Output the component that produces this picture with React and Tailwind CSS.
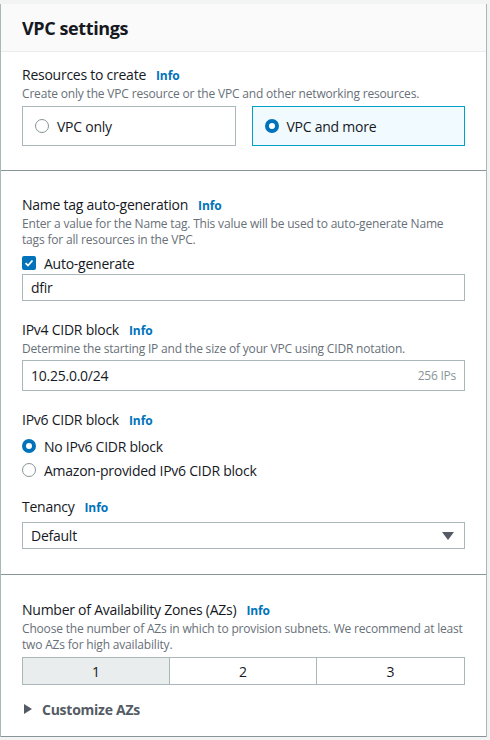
import React from "react";

const font = { fontFamily: '"Open Sans", "Noto Sans", sans-serif' };

function Info() {
  return <span className="ml-[10px] text-[12px] font-bold text-[#0073bb] tracking-[-0.1px]">Info</span>;
}

function Label({ children }) {
  return (
    <div className="flex items-baseline h-[22px] leading-[22px] text-[14px] text-[#16191f] tracking-[-0.25px]">
      <span>{children}</span>
      <Info />
    </div>
  );
}

function Desc({ children }) {
  return <div className="text-[12px] leading-[16px] text-[#687078] tracking-[-0.18px] whitespace-nowrap">{children}</div>;
}

function Radio({ checked }) {
  return checked ? (
    <span className="inline-block w-[14px] h-[14px] rounded-full border-[4px] border-[#0073bb] bg-white shrink-0" />
  ) : (
    <span className="inline-block w-[14px] h-[14px] rounded-full border border-[#879596] bg-white shrink-0" />
  );
}

export default function App() {
  return (
    <div style={font} className="w-[490px] h-[740px] bg-[#f2f3f3] pt-[4px] pr-[3px] overflow-hidden">
      <div className="bg-white border-l border-r border-[#aab7b8]">
        <div className="h-[48px] bg-[#fafafa] border-b border-[#eaeded] px-[21px] flex items-center">
          <h2 className="text-[18px] font-bold text-[#16191f] leading-[24px] tracking-[-0.4px]">VPC settings</h2>
        </div>

        <div className="px-[21px] pt-[12px] pb-[24px] border-b border-[#879596]">
          <Label>Resources to create</Label>
          <Desc>Create only the VPC resource or the VPC and other networking resources.</Desc>
          <div className="mt-[4px] grid grid-cols-2 gap-[16px] tracking-[-0.25px]">
            <div className="h-[40px] border border-[#aab7b8] flex items-center px-[12px] gap-[8px]">
              <Radio />
              <span className="text-[14px] text-[#16191f]">VPC only</span>
            </div>
            <div className="h-[40px] border border-[#00a1c9] bg-[#f1faff] flex items-center px-[12px] gap-[8px]">
              <Radio checked />
              <span className="text-[14px] text-[#16191f]">VPC and more</span>
            </div>
          </div>
        </div>

        <div className="px-[21px] pt-[23px] pb-[25px] border-b border-[#879596] tracking-[-0.25px]">
          <Label>Name tag auto-generation</Label>
          <Desc>
            Enter a value for the Name tag. This value will be used to auto-generate Name
            <br />
            tags for all resources in the VPC.
          </Desc>
          <div className="mt-[4px] h-[22px] flex items-center gap-[8px]">
            <span className="w-[14px] h-[14px] rounded-[2px] bg-[#0073bb] flex items-center justify-center">
              <svg width="10" height="10" viewBox="0 0 10 10">
                <path d="M1.5 5.2 L4 7.5 L8.5 2.5" fill="none" stroke="white" strokeWidth="1.8" />
              </svg>
            </span>
            <span className="text-[14px] text-[#16191f]">Auto-generate</span>
          </div>
          <div className="h-[27px] border border-[#aab7b8] flex items-center px-[8px] text-[14px] text-[#16191f]">
            dfir
          </div>

          <div className="mt-[18px]">
            <Label>IPv4 CIDR block</Label>
          </div>
          <Desc>Determine the starting IP and the size of your VPC using CIDR notation.</Desc>
          <div className="mt-[3px] h-[31px] border border-[#aab7b8] flex items-center justify-between px-[8px]">
            <span className="text-[14px] text-[#16191f]">10.25.0.0/24</span>
            <span className="text-[12px] text-[#879596]">256 IPs</span>
          </div>

          <div className="mt-[18px]">
            <Label>IPv6 CIDR block</Label>
          </div>
          <div className="mt-[3px] flex flex-col">
            <div className="h-[24px] flex items-center gap-[8px]">
              <Radio checked />
              <span className="text-[14px] text-[#16191f]">No IPv6 CIDR block</span>
            </div>
            <div className="h-[24px] flex items-center gap-[8px]">
              <Radio />
              <span className="text-[14px] text-[#16191f]">Amazon-provided IPv6 CIDR block</span>
            </div>
          </div>

          <div className="mt-[14px]">
            <Label>Tenancy</Label>
          </div>
          <div className="mt-[4px] h-[27px] border border-[#aab7b8] flex items-center justify-between pl-[8px] pr-[10px]">
            <span className="text-[14px] text-[#16191f]">Default</span>
            <svg width="12" height="8" viewBox="0 0 12 8">
              <path d="M0 0 L12 0 L6 8 Z" fill="#545b64" />
            </svg>
          </div>
        </div>

        <div className="px-[21px] pt-[24px] pb-[16px] border-b border-[#879596] tracking-[-0.25px]">
          <Label>Number of Availability Zones (AZs)</Label>
          <Desc>
            Choose the number of AZs in which to provision subnets. We recommend at least
            <br />
            two AZs for high availability.
          </Desc>
          <div className="mt-[4px] w-[443px] h-[28px] grid grid-cols-3 border border-[#aab7b8] text-[14px] text-[#16191f]">
            <div className="bg-[#eaeded] flex items-center justify-center border-r border-[#aab7b8]">1</div>
            <div className="flex items-center justify-center border-r border-[#aab7b8]">2</div>
            <div className="flex items-center justify-center">3</div>
          </div>
          <div className="mt-[13px] flex items-center gap-[10px] h-[22px]">
            <svg width="8" height="10" viewBox="0 0 8 10" className="ml-[2px]">
              <path d="M0 0 L8 5 L0 10 Z" fill="#545b64" />
            </svg>
            <span className="text-[14px] font-bold text-[#545b64]">Customize AZs</span>
          </div>
        </div>
      </div>
    </div>
  );
}
